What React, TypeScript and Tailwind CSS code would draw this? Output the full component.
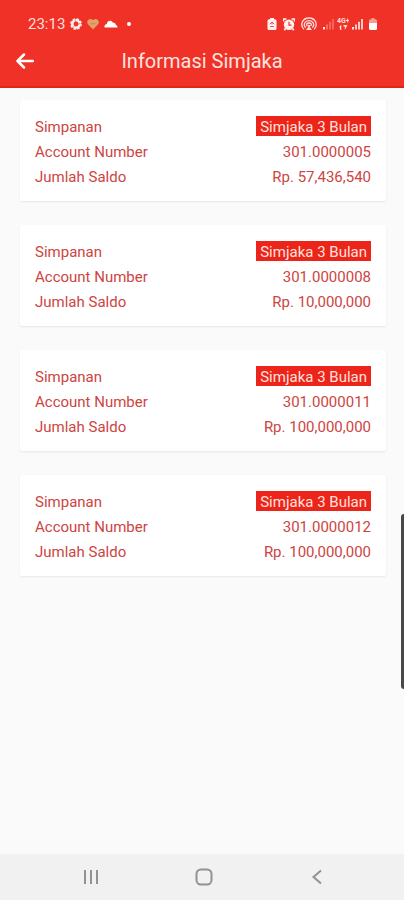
type Account = { product: string; number: string; balance: string };

const accounts: Account[] = [
  { product: 'Simjaka 3 Bulan', number: '301.0000005', balance: 'Rp. 57,436,540' },
  { product: 'Simjaka 3 Bulan', number: '301.0000008', balance: 'Rp. 10,000,000' },
  { product: 'Simjaka 3 Bulan', number: '301.0000011', balance: 'Rp. 100,000,000' },
  { product: 'Simjaka 3 Bulan', number: '301.0000012', balance: 'Rp. 100,000,000' },
];

function SettingsIcon() {
  return (
    <svg width="12" height="12" viewBox="0 0 12 12" fill="none" stroke="#fff0ee" aria-hidden="true">
      <circle cx="6" cy="6" r="3.7" strokeWidth="2.6" />
      <circle cx="6" cy="6" r="5.2" strokeWidth="1.4" strokeDasharray="2.4 1.68" />
      <path d="M6 4.6 5 1.8M7.3 6.4l2.9-.9M5 7l-1.700 2.500" stroke="#ee4237" strokeWidth=".6" />
    </svg>
  );
}

function HeartIcon() {
  return (
    <svg width="12" height="12" viewBox="0 0 12 12" fill="none" aria-hidden="true">
      <path d="M6 11.500 1.200 6.600C-1.200 3.500 1.200.6 4 1c.9.200 1.500.6 2 1.300C6.500 1.600 7.100 1.200 8 1c2.800-.4 5.200 2.500 2.800 5.600z" fill="#e3a068" />
      <path d="m3.300 5 1.500 1.500L6.200 5l1.300 1.300L9 4.800" stroke="#c9744b" strokeWidth=".7" />
    </svg>
  );
}

function CloudIcon() {
  return (
    <svg width="14" height="12" viewBox="0 0 14 12" fill="white" aria-hidden="true">
      <path d="M.5 9.500C.2 7.500 1 6.300 2.800 6c.3-3.800 4.600-4.500 6-1.500 2 .1 2.900 1.200 3 2.400 1.300.3 1.700 1.300 1.700 2.600z" />
    </svg>
  );
}

function BatteryCareIcon() {
  return (
    <svg width="10" height="14" viewBox="0 0 10 14" fill="none" aria-hidden="true">
      <path d="M3 1h4v1.200h1Q9.500 2.200 9.500 3.700v7.800Q9.500 13 8 13H2Q.5 13 .5 11.500V3.700Q.5 2.200 2 2.200h1z" fill="#fff2f0" />
      <path d="M2.800 7.200 5 5l2.200 2.200M3 9.500h4M5 5.500v2" stroke="#ef4237" strokeWidth=".9" />
    </svg>
  );
}

function AlarmIcon() {
  return (
    <svg width="12" height="13" viewBox="0 0 12 13" fill="none" aria-hidden="true">
      <path d="M.5 3.500V1h3M11.500 3.500V1h-3M2.500 10.500l-1.200 1.700M9.500 10.500l1.200 1.700" stroke="#fff0ee" strokeWidth="1.700" />
      <circle cx="6" cy="6.800" r="5.200" fill="#fff0ee" />
      <path d="M6 3.800v3.300h2.500" stroke="#ee3328" strokeWidth="1.200" />
    </svg>
  );
}

function HotspotIcon() {
  return (
    <svg width="16" height="14" viewBox="0 0 16 14" fill="none" stroke="#ffdeda" strokeWidth="1.300" aria-hidden="true">
      <path d="M3 12.400C-1.600 7.800 1.500 1 8 1s9.600 6.800 5 11.400" />
      <path d="M4.600 10.600C1.700 7.500 4 3.600 8 3.600s6.300 3.900 3.400 7" />
      <path d="M6.300 9.100C4.900 7.500 6 6 8 6s3.100 1.500 1.700 3.100" />
      <circle cx="8" cy="9" r="1.200" fill="#ffdeda" stroke="none" />
      <path d="m8 9-3 4h6z" fill="#ffdeda" stroke="none" />
    </svg>
  );
}

function SignalIcon({ bars }: { bars: number }) {
  return (
    <svg width="11" height="12" viewBox="0 0 11 12" fill="#ffe6e3" aria-hidden="true">
      <rect x="0" y="9" width="2" height="2.500" />
      <rect x="3" y="6.500" width="2" height="5" opacity={bars > 1 ? 0.85 : 0.35} />
      <rect x="6" y="3.800" width="2" height="7.700" opacity={bars > 2 ? 0.85 : 0.3} />
      <rect x="9" y="1" width="2" height="10.500" opacity={bars > 3 ? 0.85 : 0.3} />
    </svg>
  );
}

function NetworkIcon() {
  return (
    <svg width="12" height="14" viewBox="0 0 12 14" aria-hidden="true">
      <text x="0" y="6" fill="#ffdeda" fontSize="7" fontWeight="700" fontFamily="Roboto, sans-serif">4G+</text>
      <path d="M2 10.500 4.300 7.500V13H3v-2.500zM6.500 8h4L7.800 13V9.500H6.500z" fill="#ffdeda" />
    </svg>
  );
}

function BatteryIcon() {
  return (
    <svg width="8" height="14" viewBox="0 0 8 14" aria-hidden="true">
      <path d="M2.500 1h3v1.200h1Q8 2.200 8 3.700V6H0V3.700Q0 2.200 1.500 2.200h1z" fill="#f99b95" />
      <path d="M0 6h8v5.500Q8 13 6.500 13h-5Q0 13 0 11.500z" fill="white" />
    </svg>
  );
}

function StatusBar() {
  return (
    <div className="flex h-9 items-center justify-between pt-3 pr-[27px] pl-7 text-[#ffdfdc]">
      <div className="flex items-center gap-[5px]">
        <span className="text-[15px] leading-4">23:13</span>
        <SettingsIcon />
        <HeartIcon />
        <CloudIcon />
        <span className="ml-1 size-1 rounded-full bg-white" />
      </div>
      <div className="flex items-center gap-1.5">
        <BatteryCareIcon />
        <AlarmIcon />
        <HotspotIcon />
        <div className="flex items-center gap-[3px]">
          <SignalIcon bars={1} />
          <NetworkIcon />
          <SignalIcon bars={4} />
        </div>
        <BatteryIcon />
      </div>
    </div>
  );
}

function AccountCard({ account }: { account: Account }) {
  return (
    <dl className="rounded-xs bg-white px-[15px] pt-[15px] pb-[11px] text-[15px] leading-[25px] text-[#cd453f] shadow-[0_1px_2px_rgba(0,0,0,0.08)]">
      <div className="flex items-start justify-between">
        <dt>Simpanan</dt>
        <dd className="mt-px h-5 bg-[#ed2419] px-1 leading-[22px] text-[#ffe3df]">{account.product}</dd>
      </div>
      <div className="flex items-center justify-between">
        <dt>Account Number</dt>
        <dd>{account.number}</dd>
      </div>
      <div className="flex items-center justify-between">
        <dt>Jumlah Saldo</dt>
        <dd>{account.balance}</dd>
      </div>
    </dl>
  );
}

function NavigationBar() {
  return (
    <nav className="flex h-[46px] items-center justify-center bg-[#f1f1f1] pl-1 text-[#929292]">
      <button type="button" aria-label="Recent apps" className="flex w-[113px] justify-center">
        <svg width="16" height="16" viewBox="0 0 16 16" fill="none" stroke="currentColor" strokeWidth="2">
          <path d="M2 1v14M8 1v14M14 1v14" />
        </svg>
      </button>
      <button type="button" aria-label="Home" className="flex w-[113px] justify-center">
        <svg width="18" height="18" viewBox="0 0 18 18" fill="none" stroke="currentColor" strokeWidth="2">
          <rect x="1.500" y="1.500" width="15" height="15" rx="4.500" />
        </svg>
      </button>
      <button type="button" aria-label="Back" className="flex w-[113px] justify-center">
        <svg width="16" height="16" viewBox="0 0 16 16" fill="none" stroke="currentColor" strokeWidth="2">
          <path d="M12 1.500 4.500 8l7.500 6.500" />
        </svg>
      </button>
    </nav>
  );
}

export default function App() {
  return (
    <div className="relative flex min-h-screen flex-col bg-[#fafafa] font-[Roboto,sans-serif]">
      <header className="border-b-2 border-[#e1251b] bg-[#f03127]">
        <StatusBar />
        <div className="grid h-[50px] grid-cols-[50px_1fr_50px] items-center">
          <button type="button" aria-label="Go back" className="flex justify-center text-white">
            <svg width="18" height="16" viewBox="0 0 18 16" fill="none" stroke="currentColor" strokeWidth="2.500" strokeLinecap="round" strokeLinejoin="round">
              <path d="M8 1.500 1.500 8 8 14.500M2 8h15" />
            </svg>
          </button>
          <h1 className="text-center text-xl text-[#ffe3df]">Informasi Simjaka</h1>
        </div>
      </header>
      <main className="flex flex-1 flex-col gap-6 pt-3 pr-[18px] pb-6 pl-5">
        {accounts.map((account) => (
          <AccountCard key={account.number} account={account} />
        ))}
      </main>
      <NavigationBar />
      <div className="absolute top-[514px] right-0 h-[175px] w-[3px] rounded-l-sm bg-[#484848]" />
    </div>
  );
}
